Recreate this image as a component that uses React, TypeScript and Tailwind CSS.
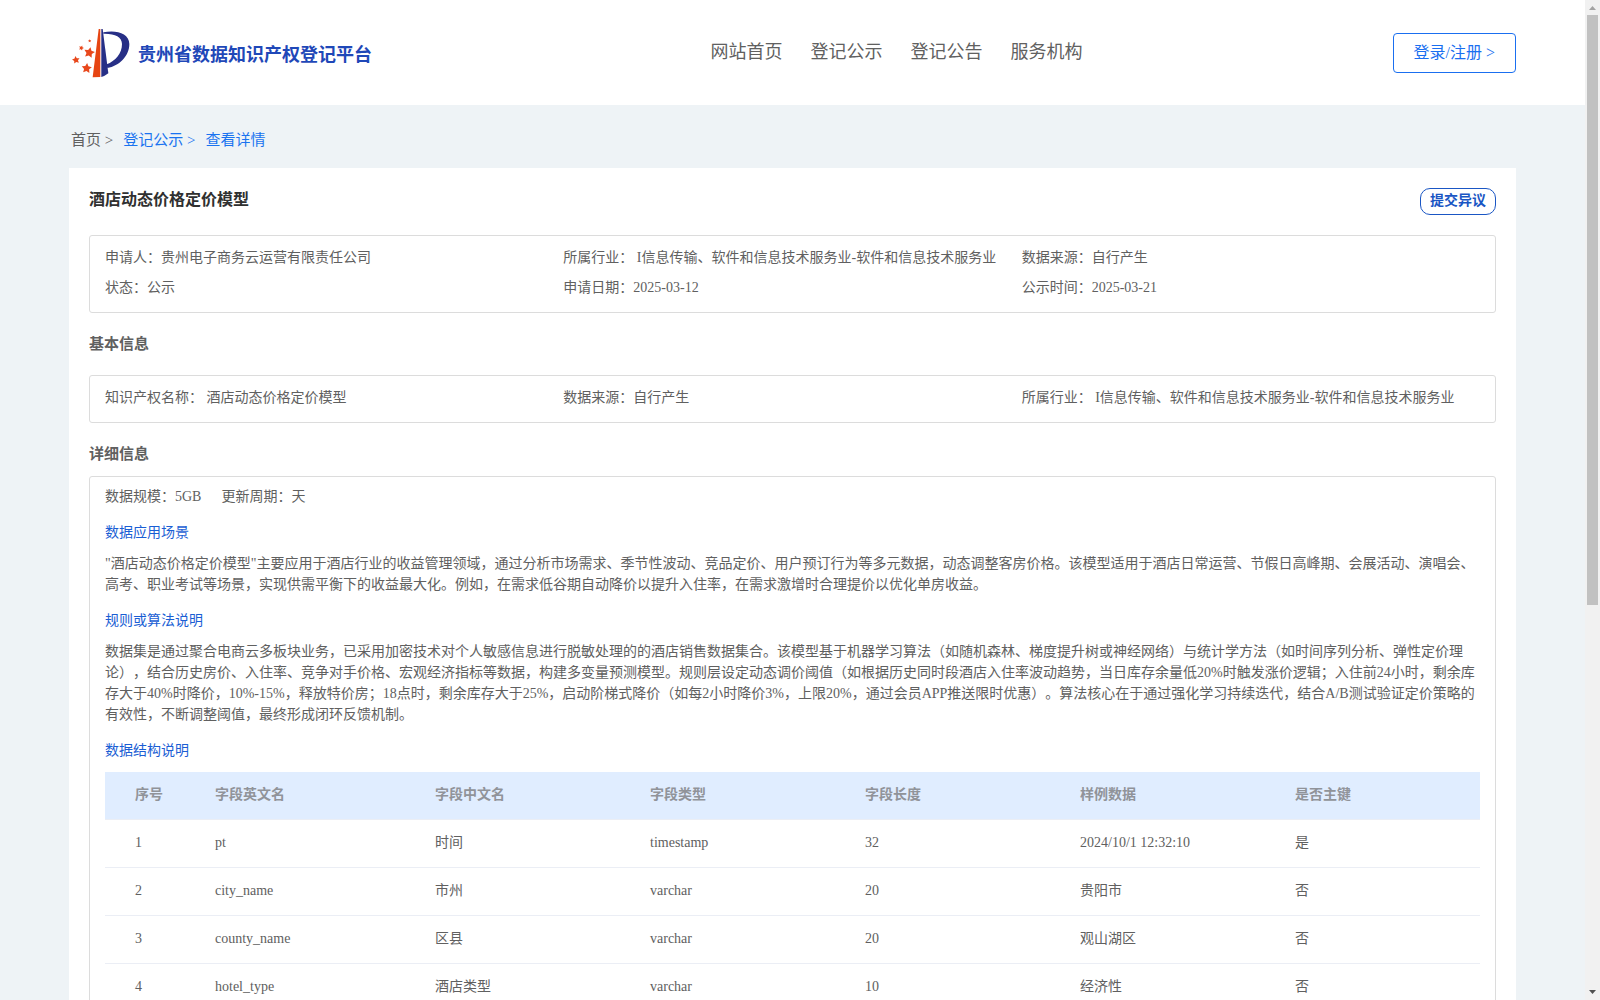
import React from "react";

const NAV_ITEMS = ["网站首页", "登记公示", "登记公告", "服务机构"];

const COLUMNS = ["序号", "字段英文名", "字段中文名", "字段类型", "字段长度", "样例数据", "是否主键"];

const ROWS = [
  ["1", "pt", "时间", "timestamp", "32", "2024/10/1 12:32:10", "是"],
  ["2", "city_name", "市州", "varchar", "20", "贵阳市", "否"],
  ["3", "county_name", "区县", "varchar", "20", "观山湖区", "否"],
  ["4", "hotel_type", "酒店类型", "varchar", "10", "经济性", "否"],
];

const STARS = [
  { x: 70, y: 98, r: 17, turn: 12 },
  { x: 30, y: 120, r: 12, turn: -10 },
  { x: 62, y: 145, r: 16, turn: 5 },
  { x: 46, y: 84, r: 8, turn: 20 },
  { x: 71, y: 63, r: 5, turn: 0 },
];

function starPoints(cx: number, cy: number, r: number, turn: number) {
  return Array.from({ length: 10 }, (_, i) => {
    const radius = i % 2 === 0 ? r : r * 0.5;
    const angle = ((i * 36 - 90 + turn) * Math.PI) / 180;
    return `${(cx + radius * Math.cos(angle)).toFixed(1)},${(cy + radius * Math.sin(angle)).toFixed(1)}`;
  }).join(" ");
}

function Logo() {
  return (
    <svg viewBox="18 24 174 150" className="h-[50px] w-[58px] shrink-0" aria-hidden="true">
      {STARS.map((s) => (
        <polygon key={`${s.x}-${s.y}`} points={starPoints(s.x, s.y, s.r, s.turn)} fill="#e8481c" />
      ))}
      <path d="M98 27 L103 27 L103 171 L80 172 Z" fill="#e64512" />
      <path d="M106 27 L110 27 L127 160 Q117 168 106 171 Z" fill="#272f86" />
      <path
        d="M112 37 C148 29 190 38 190 72 C190 108 160 138 124 144 L122 133 C148 123 168 100 168 72 C168 50 146 40 112 41 Z"
        fill="#272f86"
      />
    </svg>
  );
}

function Field({ label, children }: { label: string; children: React.ReactNode }) {
  return (
    <div className="flex whitespace-nowrap">
      <dt>{label}：</dt>
      <dd className="whitespace-pre">{children}</dd>
    </div>
  );
}

function Box({ children, className }: { children: React.ReactNode; className: string }) {
  return <div className={`rounded-[3px] border border-[#dcdcdc] px-[15px] ${className}`}>{children}</div>;
}

function SubTitle({ children }: { children: React.ReactNode }) {
  return <h3 className="mt-[15px] text-[#1a5ed4]">{children}</h3>;
}

function Scrollbar() {
  return (
    <div className="flex w-[15px] shrink-0 flex-col items-center bg-[#f1f1f1]" aria-hidden="true">
      <svg viewBox="0 0 15 15" className="h-[15px] w-[15px] shrink-0">
        <path d="M4 10 L7.5 6 L11 10 Z" fill="#a3a3a3" />
      </svg>
      <div className="h-[59%] w-[11px] bg-[#c1c1c1]" />
      <svg viewBox="0 0 15 15" className="mt-auto h-[15px] w-[15px] shrink-0">
        <path d="M4 5 L11 5 L7.5 9 Z" fill="#505050" />
      </svg>
    </div>
  );
}

export default function App() {
  return (
    <div className="flex h-screen overflow-hidden bg-[#eef3f6] font-['Liberation_Serif','Noto_Sans_CJK_SC',serif] text-sm leading-[21px] text-[#606060] [text-spacing-trim:space-all]">
      <div className="min-w-0 flex-1">
        <header className="flex h-[105px] items-center bg-white px-[69px]">
          <a href="#" className="flex flex-[3] items-center gap-2 pl-[3px] text-lg font-bold text-[#1f48b8]">
            <Logo />
            <span className="whitespace-nowrap pt-1">贵州省数据知识产权登记平台</span>
          </a>
          <nav className="mb-0.5 mr-2 flex gap-7 whitespace-nowrap text-lg">
            {NAV_ITEMS.map((item) => (
              <a key={item} href="#">
                {item}
              </a>
            ))}
          </nav>
          <div className="flex flex-[2] justify-end">
            <button
              type="button"
              className="h-10 whitespace-nowrap rounded border border-[#1a6ff0] px-5 text-base text-[#1a6ff0]"
            >
              登录/注册 &gt;
            </button>
          </div>
        </header>

        <main className="px-[69px]">
          <nav className="flex h-[63px] items-center gap-2.5 pl-0.5 pt-2 text-[15px] text-[#1a73f0]">
            <a href="#" className="text-[#606060]">
              首页 &gt;
            </a>
            <a href="#">登记公示 &gt;</a>
            <a href="#">查看详情</a>
          </nav>

          <section className="bg-white p-5">
            <div className="flex items-start justify-between">
              <h1 className="text-base font-bold text-[#303030]">酒店动态价格定价模型</h1>
              <button
                type="button"
                className="h-[27px] rounded-[10px] border border-[#1a56c4] px-[9px] pb-0.5 font-bold text-[#1a56c4]"
              >
                提交异议
              </button>
            </div>

            <Box className="mt-5 pb-3.5 pt-[11px]">
              <dl className="grid grid-cols-3 gap-y-[9px]">
                <Field label="申请人">贵州电子商务云运营有限责任公司</Field>
                <Field label="所属行业">{" I信息传输、软件和信息技术服务业-软件和信息技术服务业"}</Field>
                <Field label="数据来源">自行产生</Field>
                <Field label="状态">公示</Field>
                <Field label="申请日期">2025-03-12</Field>
                <Field label="公示时间">2025-03-21</Field>
              </dl>
            </Box>

            <h2 className="mt-[21px] text-[15px] font-bold">基本信息</h2>
            <Box className="mt-5 pb-3.5 pt-[11px]">
              <dl className="grid grid-cols-3">
                <Field label="知识产权名称">{" 酒店动态价格定价模型"}</Field>
                <Field label="数据来源">自行产生</Field>
                <Field label="所属行业">{" I信息传输、软件和信息技术服务业-软件和信息技术服务业"}</Field>
              </dl>
            </Box>

            <h2 className="mt-[21px] text-[15px] font-bold">详细信息</h2>
            <Box className="mt-[11px] py-[9px]">
              <dl className="flex gap-5">
                <Field label="数据规模">5GB</Field>
                <Field label="更新周期">天</Field>
              </dl>

              <SubTitle>数据应用场景</SubTitle>
              <p className="mt-2.5">
                "酒店动态价格定价模型"主要应用于酒店行业的收益管理领域，通过分析市场需求、季节性波动、竞品定价、用户预订行为等多元数据，动态调整客房价格。该模型适用于酒店日常运营、节假日高峰期、会展活动、演唱会、高考、职业考试等场景，实现供需平衡下的收益最大化。例如，在需求低谷期自动降价以提升入住率，在需求激增时合理提价以优化单房收益。
              </p>

              <SubTitle>规则或算法说明</SubTitle>
              <p className="mt-2.5">
                数据集是通过聚合电商云多板块业务，已采用加密技术对个人敏感信息进行脱敏处理的的酒店销售数据集合。该模型基于机器学习算法（如随机森林、梯度提升树或神经网络）与统计学方法（如时间序列分析、弹性定价理论），结合历史房价、入住率、竞争对手价格、宏观经济指标等数据，构建多变量预测模型。规则层设定动态调价阈值（如根据历史同时段酒店入住率波动趋势，当日库存余量低20%时触发涨价逻辑；入住前24小时，剩余库存大于40%时降价，10%-15%，释放特价房；18点时，剩余库存大于25%，启动阶梯式降价（如每2小时降价3%，上限20%，通过会员APP推送限时优惠）。算法核心在于通过强化学习持续迭代，结合A/B测试验证定价策略的有效性，不断调整阈值，最终形成闭环反馈机制。
              </p>

              <SubTitle>数据结构说明</SubTitle>
              <table className="mt-[11px] w-full table-fixed text-left">
                <colgroup>
                  <col className="w-[100px]" />
                  <col className="w-[220px]" />
                  <col className="w-[215px]" />
                  <col className="w-[215px]" />
                  <col className="w-[215px]" />
                  <col className="w-[215px]" />
                  <col />
                </colgroup>
                <thead>
                  <tr className="h-[47px] border-b border-[#ebeef5] bg-[#e0edff] text-[#909399]">
                    {COLUMNS.map((name) => (
                      <th key={name} scope="col" className="px-2.5 pb-px font-bold first:pl-[30px]">
                        {name}
                      </th>
                    ))}
                  </tr>
                </thead>
                <tbody>
                  {ROWS.map((row) => (
                    <tr key={row[0]} className="h-12 border-b border-[#ebeef5]">
                      {row.map((cell, i) => (
                        <td key={COLUMNS[i]} className="px-2.5 pb-px first:pl-[30px]">
                          {cell}
                        </td>
                      ))}
                    </tr>
                  ))}
                </tbody>
              </table>
            </Box>
          </section>
        </main>
      </div>
      <Scrollbar />
    </div>
  );
}
